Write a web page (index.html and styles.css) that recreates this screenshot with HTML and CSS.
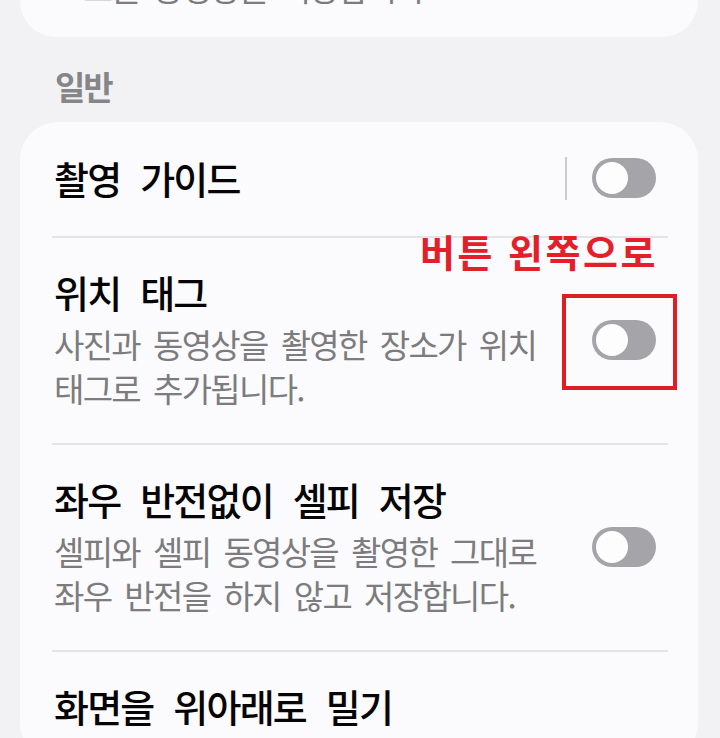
FILE: index.html
```html
<!DOCTYPE html>
<html lang="ko">
<head>
<meta charset="utf-8">
<title>카메라 설정</title>
<link rel="stylesheet" href="styles.css">
</head>
<body>
<div class="screen">
  <section class="card card-top">
    <p class="sub">고효율 동영상을 저장합니다</p>
  </section>

  <h2 class="section-title">일반</h2>

  <section class="card card-main">
    <div class="row">
      <div class="text"><div class="title">촬영 가이드</div></div>
      <span class="vdivider"></span>
      <span class="toggle"><span class="thumb"></span></span>
    </div>

    <div class="row row-annotated">
      <div class="text">
        <div class="title">위치 태그</div>
        <div class="sub">사진과 동영상을 촬영한 장소가 위치 태그로 추가됩니다.</div>
      </div>
      <span class="toggle"><span class="thumb"></span></span>
      <span class="annotation-label">버튼 왼쪽으로</span>
      <span class="annotation-box"></span>
    </div>

    <div class="row">
      <div class="text">
        <div class="title">좌우 반전없이 셀피 저장</div>
        <div class="sub">셀피와 셀피 동영상을 촬영한 그대로 좌우 반전을 하지 않고 저장합니다.</div>
      </div>
      <span class="toggle"><span class="thumb"></span></span>
    </div>

    <div class="row">
      <div class="text"><div class="title">화면을 위아래로 밀기</div></div>
    </div>
  </section>
</div>
</body>
</html>
```

FILE: styles.css
```css
html, body {
  margin: 0;
  padding: 0;
}

body {
  background: #f2f2f4;
  font-family: "Noto Sans CJK KR", "Noto Sans", sans-serif;
  width: 720px;
  height: 738px;
  overflow: hidden;
}

.screen {
  display: flex;
  flex-direction: column;
}

.card {
  background: #fbfbfd;
  border-radius: 38px;
  margin: 0 22px 0 20px;
  padding: 0 30px 0 32px;
}

.card-top {
  margin-top: -35px;
  padding-bottom: 28px;
}

.card-top .sub {
  margin: 0 0 0 2px;
}

.section-title {
  margin: 29px 0 16px 55px;
  font-size: 33px;
  line-height: 40px;
  font-weight: 700;
  letter-spacing: -2px;
  color: #868688;
}

.row {
  position: relative;
  display: flex;
  align-items: center;
  padding: 32px 12px 33px 0;
}

.row:first-child {
  padding-top: 34px;
  padding-bottom: 36px;
}

.row + .row {
  border-top: 2px solid #e4e4e6;
}

.text {
  flex: 1;
  min-width: 0;
  margin-left: 2px;
  margin-right: 20px;
}

.title {
  font-size: 38px;
  line-height: 44px;
  font-weight: 500;
  letter-spacing: -1.8px;
  word-spacing: 11px;
  color: #050505;
  word-break: keep-all;
}

.sub {
  margin-top: 8px;
  font-size: 33px;
  line-height: 44px;
  letter-spacing: -1.7px;
  word-spacing: 5.5px;
  color: #7c7c7e;
  word-break: keep-all;
}

.vdivider {
  width: 2px;
  height: 43px;
  background: #cbcbcd;
  margin-right: 25px;
}

.toggle {
  flex: none;
  box-sizing: border-box;
  width: 64px;
  height: 40px;
  border-radius: 20px;
  background: #a5a5a9;
  display: flex;
  align-items: center;
  padding-left: 4px;
}

.thumb {
  width: 32px;
  height: 32px;
  border-radius: 50%;
  background: #fdfdfd;
}

.annotation-label {
  position: absolute;
  left: 368px;
  top: -6px;
  font-size: 38px;
  line-height: 38px;
  font-weight: 700;
  letter-spacing: 2.5px;
  color: #e3202a;
  white-space: nowrap;
}

.annotation-box {
  position: absolute;
  left: 510px;
  top: 56px;
  width: 115px;
  height: 96px;
  box-sizing: border-box;
  border: 4px solid #dc1e25;
}
```
